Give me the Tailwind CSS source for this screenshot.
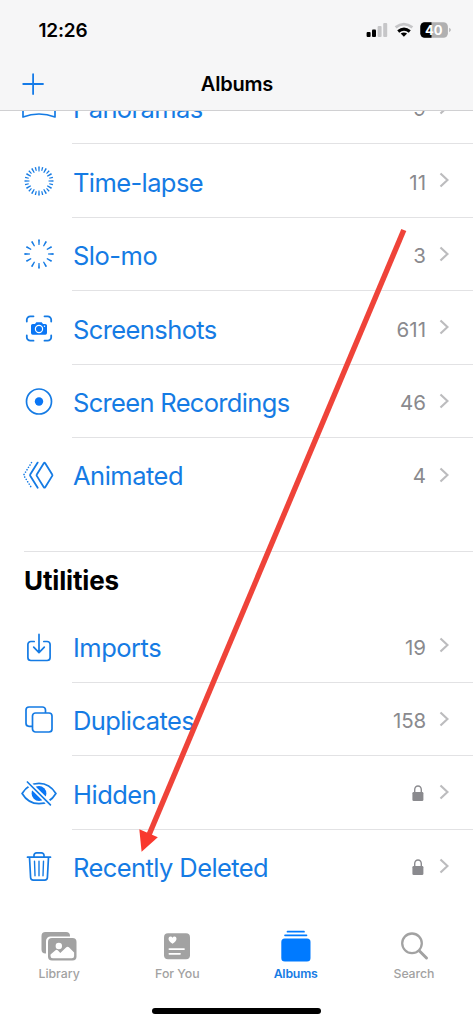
<!DOCTYPE html>
<html lang="en">
<head>
<meta charset="utf-8">
<meta name="viewport" content="width=device-width, initial-scale=1">
<title>Albums</title>
<script src="https://cdn.jsdelivr.net/npm/@tailwindcss/browser@4"></script>
</head>
<body class="bg-white font-['Inter',sans-serif] antialiased">
<div class="relative w-[473px] h-[1024px] overflow-hidden bg-white flex flex-col">
  <header class="relative z-10 h-[111px] shrink-0 bg-[#f6f6f7] border-b border-[#d0d0d2] flex flex-col">
    <div class="h-[60px] pl-[38.5px] pr-[21px] flex items-center justify-between">
      <span class="pt-[2px] text-[19px] leading-6 font-semibold tracking-[-0.2px]">12:26</span>
      <svg class="w-[86px] h-5" viewBox="366 20 86 20">
        <rect x="366.6" y="32" width="4" height="5" rx="1"/><rect x="372" y="29.5" width="4" height="7.5" rx="1"/>
        <g fill="#c6c6c8"><rect x="377.6" y="26" width="4" height="11" rx="1"/><rect x="383.2" y="23" width="4" height="14" rx="1"/></g>
        <g fill="none" stroke-width="2.8"><path d="M395.6 27.4q8.2-6.6 16.8 0" stroke="#c6c6c8"/><path d="M398.2 31.5q5.8-4.8 11.600 0" stroke="#000" stroke-width="3"/></g>
        <path d="M400.700 33.600q3.200-2.400 6.400 0l-3.200 3.200z"/>
        <rect x="420.3" y="22.3" width="27.6" height="15.4" rx="4.4" fill="#b0b0b1"/>
        <path d="M431.5 22.3h-6.8a4.4 4.4 0 0 0-4.4 4.4v6.6a4.4 4.4 0 0 0 4.4 4.4h6.8z"/>
        <path d="M449.2 27.8q3.2 2.2 0 4.4z" fill="#b0b0b1"/>
        <text x="433.8" y="34.8" font-size="13" font-weight="700" text-anchor="middle" fill="#fff">40</text>
      </svg>
    </div>
    <div class="h-[50px] px-[22px] grid grid-cols-3 items-center">
      <svg class="w-[22px] h-[22px] -mt-[3px]" viewBox="0 0 22 22" fill="none" stroke="#157be8" stroke-width="1.800" stroke-linecap="round"><path d="M1.200 11h19.800M11.100 1.200v19.800"/></svg>
      <h1 class="text-center text-[20px] leading-6 -mt-[2px] pl-[1px] font-semibold tracking-[-0.2px]">Albums</h1>
    </div>
  </header>

  <main class="h-[792px] shrink-0 -mt-[40.5px] text-[#157be4]">
    <ul>
      <li class="h-[73.5px] flex items-center pl-[21px]">
        <svg class="w-9 h-9 shrink-0" viewBox="-18 -18 36 36" fill="none" stroke="currentColor" stroke-width="1.700" stroke-linejoin="round"><path d="M-16-10.500q16 6 32 0v20.500q-16-6-32 0z"/></svg>
        <div class="ml-[15px] h-full flex-1 flex items-center border-b border-[#e2e2e4] pl-[1px] pr-[24px]">
          <span class="flex-1 pt-[5px] text-[25.500px] leading-8 tracking-[-0.600px]">Panoramas</span>
          <span class="pt-[5px] text-[20.500px] leading-6 text-[#8a8a8e]">9</span>
          <svg class="ml-[13px] w-[10px] h-4" viewBox="0 0 10 16" fill="none" stroke="#bcbcbe" stroke-width="2.200"><path d="M1.500 1.500l7 6.500-7 6.500"/></svg>
        </div>
      </li>
      <li class="h-[73.5px] flex items-center pl-[21px]">
        <svg class="w-9 h-9 shrink-0" viewBox="-18 -18 36 36" fill="none" stroke="currentColor"><circle r="12" stroke-width="5" pathLength="120" stroke-dasharray="2.200 7.800" stroke-dashoffset="1.100"/><circle r="12.500" stroke-width="3.800" pathLength="120" stroke-dasharray="1.900 8.100" stroke-dashoffset="-4.050"/></svg>
        <div class="ml-[15px] h-full flex-1 flex items-center border-b border-[#e2e2e4] pl-[1px] pr-[24px]">
          <span class="flex-1 pt-[5px] text-[25.500px] leading-8 tracking-[-0.600px]">Time-lapse</span>
          <span class="pt-[5px] text-[20.500px] leading-6 text-[#8a8a8e]">11</span>
          <svg class="ml-[13px] w-[10px] h-4" viewBox="0 0 10 16" fill="none" stroke="#bcbcbe" stroke-width="2.200"><path d="M1.500 1.500l7 6.500-7 6.500"/></svg>
        </div>
      </li>
      <li class="h-[73.5px] flex items-center pl-[21px]">
        <svg class="w-9 h-9 shrink-0" viewBox="-18 -18 36 36" fill="none" stroke="currentColor"><circle r="11.800" stroke-width="5.600" pathLength="120" stroke-dasharray="2.500 7.500" stroke-dashoffset="1.250"/></svg>
        <div class="ml-[15px] h-full flex-1 flex items-center border-b border-[#e2e2e4] pl-[1px] pr-[24px]">
          <span class="flex-1 pt-[5px] text-[25.500px] leading-8 tracking-[-0.500px]">Slo-mo</span>
          <span class="pt-[5px] text-[20.500px] leading-6 text-[#8a8a8e]">3</span>
          <svg class="ml-[13px] w-[10px] h-4" viewBox="0 0 10 16" fill="none" stroke="#bcbcbe" stroke-width="2.200"><path d="M1.500 1.500l7 6.500-7 6.500"/></svg>
        </div>
      </li>
      <li class="h-[73.5px] flex items-center pl-[21px]">
        <svg class="w-9 h-9 shrink-0" viewBox="-18 -18.500 36 36" fill="none" stroke="currentColor" stroke-width="1.800" stroke-linecap="round"><path d="M-12.200-7v-1.700a3.500 3.500 0 0 1 3.500-3.500h3.200M5.500-12.200h3.200a3.500 3.500 0 0 1 3.500 3.500v1.700M12.200 7v1.700a3.500 3.500 0 0 1-3.500 3.500h-3.200M-5.500 12.200h-3.200a3.500 3.500 0 0 1-3.500-3.500v-1.700"/><path d="M-6.300-4.600h2.300l1.300-1.700h5.400l1.300 1.700h2.300a1.700 1.700 0 0 1 1.700 1.700v7.400a1.700 1.700 0 0 1-1.700 1.700h-12.600a1.700 1.700 0 0 1-1.700-1.700v-7.400a1.700 1.700 0 0 1 1.700-1.700z" fill="#0a76f5" stroke="none"/><circle cy=".5" r="3.600" stroke="#fff" stroke-width="1.200"/><circle cx="5.500" cy="-2.200" r=".7" fill="#fff" stroke="none"/></svg>
        <div class="ml-[15px] h-full flex-1 flex items-center border-b border-[#e2e2e4] pl-[1px] pr-[24px]">
          <span class="flex-1 pt-[5px] text-[25.500px] leading-8 tracking-[-0.600px]">Screenshots</span>
          <span class="pt-[5px] text-[20.500px] leading-6 text-[#8a8a8e]">611</span>
          <svg class="ml-[13px] w-[10px] h-4" viewBox="0 0 10 16" fill="none" stroke="#bcbcbe" stroke-width="2.200"><path d="M1.500 1.500l7 6.500-7 6.500"/></svg>
        </div>
      </li>
      <li class="h-[73.5px] flex items-center pl-[21px]">
        <svg class="w-9 h-9 shrink-0" viewBox="-18 -18.500 36 36" fill="none" stroke="currentColor" stroke-width="1.700"><circle r="12.500"/><circle r="4.200" fill="#0a76f5" stroke="none"/></svg>
        <div class="ml-[15px] h-full flex-1 flex items-center border-b border-[#e2e2e4] pl-[1px] pr-[24px]">
          <span class="flex-1 pt-[5px] text-[25.500px] leading-8 tracking-[-0.680px]">Screen Recordings</span>
          <span class="pt-[5px] text-[20.500px] leading-6 text-[#8a8a8e]">46</span>
          <svg class="ml-[13px] w-[10px] h-4" viewBox="0 0 10 16" fill="none" stroke="#bcbcbe" stroke-width="2.200"><path d="M1.500 1.500l7 6.500-7 6.500"/></svg>
        </div>
      </li>
      <li class="h-[73.5px] flex items-center pl-[21px]">
        <svg class="w-9 h-9 shrink-0" viewBox="-18 -18.200 36 36" fill="none" stroke="currentColor" stroke-width="1.800" stroke-linecap="round" stroke-linejoin="round"><path d="M4.800-12q.7-1 1.400 0l7 11.300q.5.700 0 1.400l-7 11.300q-.7 1-1.400 0l-7-11.300q-.5-.7 0-1.400zM-1.300-12.600l-7.500 12q-.4.600 0 1.200l7.500 12"/><path d="M-7.500-12.600l-7.600 12.100q-.3.500 0 1l7.600 12.100" stroke-width="1.600" stroke-dasharray=".1 2.700"/></svg>
        <div class="ml-[15px] h-full flex-1 flex items-center pl-[1px] pr-[24px]">
          <span class="flex-1 pt-[3px] text-[25.500px] leading-8 tracking-[-0.500px]">Animated</span>
          <span class="pt-[3px] text-[20.500px] leading-6 text-[#8a8a8e]">4</span>
          <svg class="ml-[13px] w-[10px] h-4" viewBox="0 0 10 16" fill="none" stroke="#bcbcbe" stroke-width="2.200"><path d="M1.500 1.500l7 6.500-7 6.500"/></svg>
        </div>
      </li>
    </ul>

    <h2 class="mt-[39px] ml-6 h-[58.5px] border-t border-[#e2e2e4] pt-[13px] text-[26px] leading-8 font-bold tracking-[-0.150px] text-black">Utilities</h2>

    <ul>
      <li class="h-[73.5px] flex items-center pl-[21px]">
        <svg class="w-9 h-9 shrink-0" viewBox="-18 -18 36 36" fill="none" stroke="currentColor" stroke-width="1.700" stroke-linecap="round" stroke-linejoin="round"><path d="M-4.800-4.500h-3.300a3 3 0 0 0-3 3v13a3 3 0 0 0 3 3h16.200a3 3 0 0 0 3-3v-13a3 3 0 0 0-3-3h-3.300M0-11.600v18M-5.300 1.200l5.300 5.400 5.300-5.400"/></svg>
        <div class="ml-[15px] h-full flex-1 flex items-center border-b border-[#e2e2e4] pl-[1px] pr-[24px]">
          <span class="flex-1 pt-[5px] text-[25.500px] leading-8 tracking-[-0.500px]">Imports</span>
          <span class="pt-[5px] text-[20.500px] leading-6 text-[#8a8a8e]">19</span>
          <svg class="ml-[13px] w-[10px] h-4" viewBox="0 0 10 16" fill="none" stroke="#bcbcbe" stroke-width="2.200"><path d="M1.500 1.500l7 6.500-7 6.500"/></svg>
        </div>
      </li>
      <li class="h-[73.5px] flex items-center pl-[21px]">
        <svg class="w-9 h-9 shrink-0" viewBox="-18 -18 36 36" fill="none" stroke="currentColor" stroke-width="1.700"><rect x="-6.500" y="-6" width="19.500" height="19" rx="3"/><path d="M-6.500 7.300h-3.500a3 3 0 0 1-3-3v-13.300a3 3 0 0 1 3-3h13.500a3 3 0 0 1 3 3v3"/></svg>
        <div class="ml-[15px] h-full flex-1 flex items-center border-b border-[#e2e2e4] pl-[1px] pr-[24px]">
          <span class="flex-1 pt-[5px] text-[25.500px] leading-8 tracking-[-0.600px]">Duplicates</span>
          <span class="pt-[5px] text-[20.500px] leading-6 tracking-[-0.200px] text-[#8a8a8e]">158</span>
          <svg class="ml-[13px] w-[10px] h-4" viewBox="0 0 10 16" fill="none" stroke="#bcbcbe" stroke-width="2.200"><path d="M1.500 1.500l7 6.500-7 6.500"/></svg>
        </div>
      </li>
      <li class="h-[73.5px] flex items-center pl-[21px]">
        <svg class="w-9 h-9 shrink-0" viewBox="-18 -18.500 36 36" fill="none" stroke="currentColor" stroke-width="1.700" stroke-linecap="round"><path d="M-16.900 0C-13-6.500-7-10.200 0-10.200S13-6.500 16.900 0C13 6.500 7 10.200 0 10.200S-13 6.500-16.900 0z"/><circle r="7.400" fill="#0a76f5" stroke="none"/><path d="M-11.800-11.600l23.400 23" stroke="#fff" stroke-width="5" stroke-linecap="butt"/><path d="M-11.600-11.500l23 22.800"/></svg>
        <div class="ml-[15px] h-full flex-1 flex items-center border-b border-[#e2e2e4] pl-[1px] pr-[24px]">
          <span class="flex-1 pt-[5px] text-[25.500px] leading-8 tracking-[-0.500px]">Hidden</span>
          <svg class="w-3 h-4 mr-[2px] mt-[2px]" viewBox="0 0 12 16"><rect x=".400" y="7" width="11" height="9" rx="1.300" fill="#8a8a8e"/><path d="M2.700 8v-3.300a3.300 3.700 0 0 1 6.600 0v3.300" fill="none" stroke="#8a8a8e" stroke-width="1.400"/></svg>
          <svg class="ml-[13px] w-[10px] h-4" viewBox="0 0 10 16" fill="none" stroke="#bcbcbe" stroke-width="2.200"><path d="M1.500 1.500l7 6.500-7 6.500"/></svg>
        </div>
      </li>
      <li class="h-[73.5px] flex items-center pl-[21px]">
        <svg class="w-9 h-9 shrink-0" viewBox="-18 -18 36 36" fill="none" stroke="currentColor" stroke-width="1.700" stroke-linecap="round" stroke-linejoin="round"><path d="M-11.500-8.800h23M-5-9v-1.700a2.500 2.500 0 0 1 2.500-2.500h5a2.500 2.500 0 0 1 2.500 2.500v1.700M-9.500-8.800l1.100 20.300a2.700 2.700 0 0 0 2.700 2.600h11.400a2.700 2.700 0 0 0 2.700-2.600l1.100-20.300"/><path d="M-4.500-4.800l.5 14.600M0-4.800v14.600M4.500-4.800l-.5 14.600" stroke-width="1.400"/></svg>
        <div class="ml-[15px] h-full flex-1 flex items-center pl-[1px] pr-[24px]">
          <span class="flex-1 pt-[4px] text-[25.500px] leading-8 tracking-[-0.580px]">Recently Deleted</span>
          <svg class="w-3 h-4 mr-[2px] mt-[1px]" viewBox="0 0 12 16"><rect x=".400" y="7" width="11" height="9" rx="1.300" fill="#8a8a8e"/><path d="M2.700 8v-3.300a3.300 3.700 0 0 1 6.600 0v3.300" fill="none" stroke="#8a8a8e" stroke-width="1.400"/></svg>
          <svg class="ml-[13px] w-[10px] h-4" viewBox="0 0 10 16" fill="none" stroke="#bcbcbe" stroke-width="2.200"><path d="M1.500 1.500l7 6.500-7 6.500"/></svg>
        </div>
      </li>
    </ul>
  </main>

  <nav class="mt-auto h-[96px] shrink-0 grid grid-cols-4 text-[12.300px] leading-4 font-medium text-[#a2a2a2]">
    <a class="flex flex-col items-center">
      <svg class="w-10 h-9" viewBox="-20 -18 40 36" fill="currentColor"><path d="M-13.500-14h20.500a4 4 0 0 1 4 4v.5h-19.500a4.500 4.500 0 0 0-4.500 4.500v12.500h-.5a4 4 0 0 1-4-4v-13.500a4 4 0 0 1 4-4z"/><rect x="-11" y="-8" width="28.500" height="22.500" rx="4"/><circle cx="-.2" cy="0" r="3.200" fill="#fff"/><path d="M-8.500 8.600l5-4.300q1.100-.9 2.200 0l2.600 2.600 6-5.600q1.300-1.100 2.600 0l5.200 5.200v3.500q0 2.300-2.300 2.300h-19q-2.300 0-2.300-2.300z" fill="#fff"/></svg>
      <span class="mt-[2px]">Library</span>
    </a>
    <a class="flex flex-col items-center">
      <svg class="w-10 h-9" viewBox="-20 -18 40 36" fill="currentColor"><rect x="-13" y="-12.700" width="26" height="26" rx="4"/><path d="M-4.500-2.200q-4-2.700-4-5.100 0-2.200 2-2.200 1.400 0 2 1.300.6-1.300 2-1.300 2 0 2 2.200 0 2.400-4 5.100z" fill="#fff"/><path d="M-7.600 3.100h14.600M-7.600 7.800h10.600" stroke="#fff" stroke-width="1.800" stroke-linecap="round"/></svg>
      <span class="mt-[2px]">For You</span>
    </a>
    <a class="flex flex-col items-center text-[#157be4]">
      <svg class="w-10 h-9" viewBox="-20 -18 40 36" fill="#007aff"><rect x="-14.700" y="-7.500" width="29.200" height="23" rx="3.500"/><path d="M-8.500-14.300h16.500M-11-10.700h21.500" stroke="#007aff" stroke-width="1.700" stroke-linecap="round"/></svg>
      <span class="mt-[2px] font-semibold tracking-[-0.200px]">Albums</span>
    </a>
    <a class="flex flex-col items-center">
      <svg class="w-10 h-9" viewBox="-20 -18 40 36" fill="none" stroke="currentColor" stroke-linecap="round"><circle cx="-2" cy="-2.700" r="9.800" stroke-width="2.300"/><path d="M5.500 5l7 7" stroke-width="3"/></svg>
      <span class="mt-[2px] tracking-[-0.100px]">Search</span>
    </a>
  </nav>

  <div class="absolute left-[152px] top-[1008px] w-[169px] h-[6px] rounded-full bg-black"></div>

  <svg class="absolute inset-0 w-[473px] h-[1024px] z-20 pointer-events-none" viewBox="0 0 473 1024"><path d="M403.800 230L148.500 836" stroke="#ef4339" stroke-width="5.400" fill="none"/><path d="M139.300 829.300l18.500 8-16.200 14.400z" fill="#f9382e"/></svg>
</div>
</body>
</html>
